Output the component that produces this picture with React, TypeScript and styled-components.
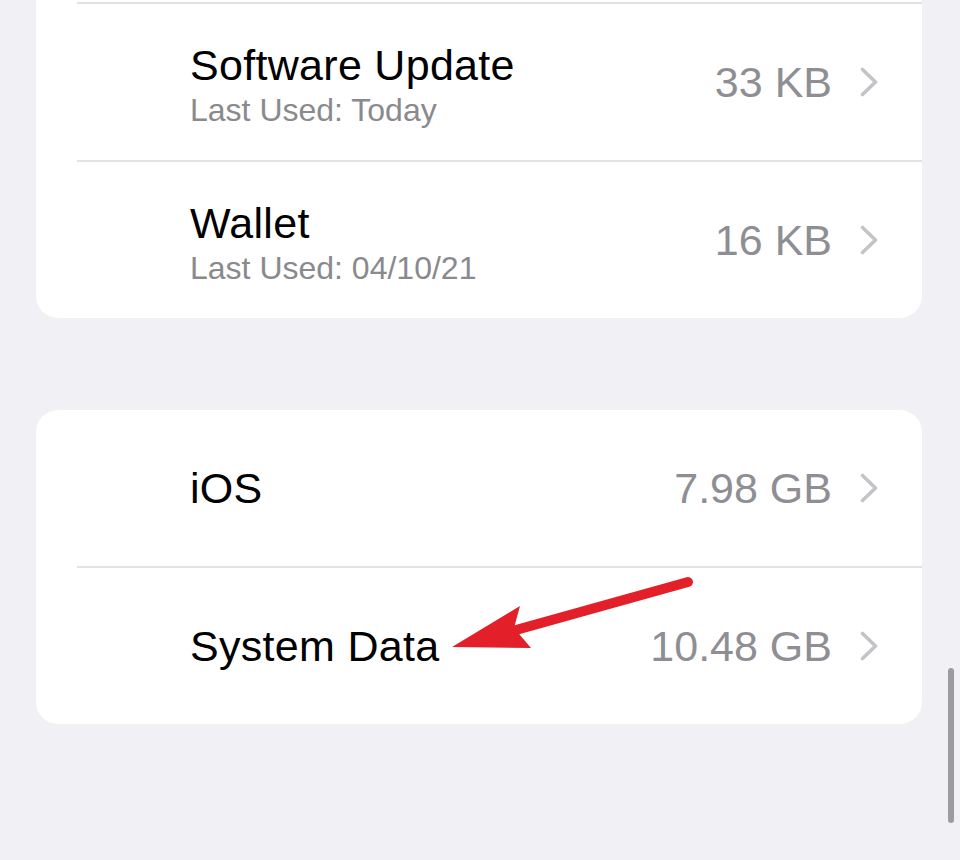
import styled, { createGlobalStyle } from "styled-components";

const GlobalStyle = createGlobalStyle`
  html, body {
    margin: 0;
    padding: 0;
    background: #f0f0f5;
  }
  body {
    font-family: "Liberation Sans", Arial, sans-serif;
    -webkit-font-smoothing: antialiased;
  }
`;

type Entry = {
  title: string;
  sub?: string;
  size: string;
};

const apps: Entry[] = [
  { title: "Software Update", sub: "Last Used: Today", size: "33 KB" },
  { title: "Wallet", sub: "Last Used: 04/10/21", size: "16 KB" },
];

const system: Entry[] = [
  { title: "iOS", size: "7.98 GB" },
  { title: "System Data", size: "10.48 GB" },
];

const App = () => {
  return (
    <>
      <GlobalStyle />
      <Screen>
        <Group $cutTop>
          {apps.map((item) => (
            <StorageRow key={item.title} item={item} divided />
          ))}
        </Group>

        <Group>
          {system.map((item, i) => (
            <StorageRow key={item.title} item={item} divided={i > 0} />
          ))}
        </Group>

        <ScrollIndicator />

        {/* red callout pointing at the System Data row */}
        <Pointer viewBox="0 0 960 860">
          <line
            x1="688"
            y1="582"
            x2="516"
            y2="630"
            stroke="#e3202a"
            strokeWidth="10"
            strokeLinecap="round"
          />
          <polygon points="452,647 520,606 514,628 531,648" fill="#e3202a" />
        </Pointer>
      </Screen>
    </>
  );
};

const StorageRow = ({ item, divided }: { item: Entry; divided?: boolean }) => (
  <Row $divided={divided}>
    <Labels $sub={!!item.sub}>
      <Title>{item.title}</Title>
      {item.sub && <Sub>{item.sub}</Sub>}
    </Labels>
    <Value>{item.size}</Value>
    <Chevron viewBox="0 0 18 30">
      <polyline
        points="2.5,2.5 15.5,15 2.5,27.5"
        fill="none"
        stroke="#c4c4c8"
        strokeWidth="3.6"
        strokeLinecap="round"
        strokeLinejoin="round"
      />
    </Chevron>
  </Row>
);

const Screen = styled.main`
  position: relative;
  width: 960px;
  height: 860px;
  overflow: hidden;
  background: #f0f0f5;
  display: flex;
  flex-direction: column;
  gap: 92px;
`;

const Group = styled.section<{ $cutTop?: boolean }>`
  margin: 0 38px 0 36px;
  background: #ffffff;
  border-radius: ${(p) => (p.$cutTop ? "0 0 22px 22px" : "22px")};
  padding-top: ${(p) => (p.$cutTop ? "2px" : "0")};
  overflow: hidden;
`;

const Row = styled.div<{ $divided?: boolean }>`
  display: flex;
  align-items: center;
  height: 156px;
  margin-left: 41px;
  padding: 0 44px 0 113px;
  border-top: ${(p) => (p.$divided ? "2px solid #e2e2e6" : "none")};
`;

const Labels = styled.div<{ $sub?: boolean }>`
  flex: 1;
  display: flex;
  flex-direction: column;
  gap: 2px;
  padding-top: ${(p) => (p.$sub ? "6px" : "0")};
`;

const Title = styled.div`
  font-size: 43px;
  line-height: 48px;
  letter-spacing: 0.3px;
  color: #000000;
`;

const Sub = styled.div`
  font-size: 32px;
  line-height: 38px;
  color: #8a8a8e;
`;

const Value = styled.div`
  font-size: 43px;
  line-height: 48px;
  color: #8e8e93;
  margin-right: 28px;
`;

const Chevron = styled.svg`
  width: 18px;
  height: 30px;
  flex-shrink: 0;
`;

const ScrollIndicator = styled.div`
  position: absolute;
  left: 948px;
  top: 668px;
  width: 6px;
  height: 155px;
  border-radius: 3px;
  background: #9c9ca0;
`;

const Pointer = styled.svg`
  position: absolute;
  inset: 0;
  width: 960px;
  height: 860px;
  pointer-events: none;
`;

export default App;
